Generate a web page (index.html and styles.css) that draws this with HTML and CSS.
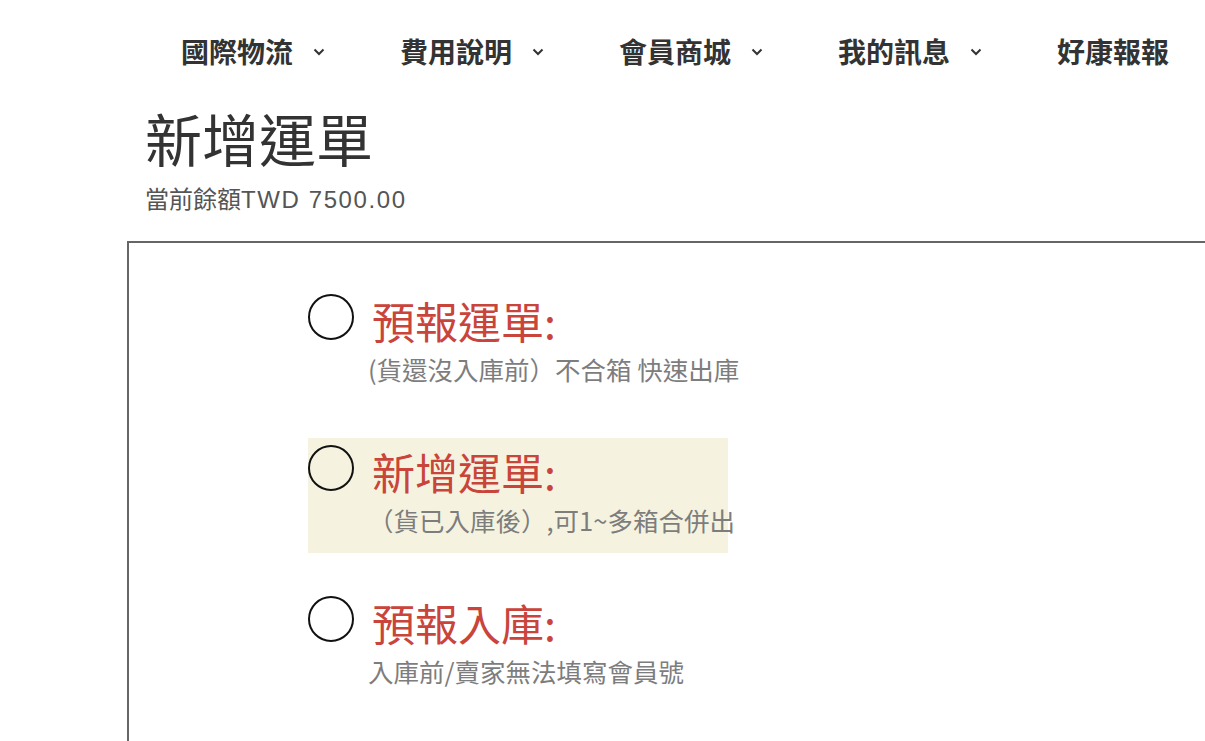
FILE: index.html
```html
<!DOCTYPE html>
<html lang="zh-Hant">
<head>
<meta charset="utf-8">
<title>新增運單</title>
<link rel="stylesheet" href="styles.css">
</head>
<body>
<header class="nav">
  <div class="nav-item">國際物流<span class="chev"><svg width="12" height="8" viewBox="0 0 12 8"><path d="M1.5 1.5 L6 6 L10.5 1.5" fill="none" stroke="#333" stroke-width="2"/></svg></span></div>
  <div class="nav-item">費用說明<span class="chev"><svg width="12" height="8" viewBox="0 0 12 8"><path d="M1.5 1.5 L6 6 L10.5 1.5" fill="none" stroke="#333" stroke-width="2"/></svg></span></div>
  <div class="nav-item">會員商城<span class="chev"><svg width="12" height="8" viewBox="0 0 12 8"><path d="M1.5 1.5 L6 6 L10.5 1.5" fill="none" stroke="#333" stroke-width="2"/></svg></span></div>
  <div class="nav-item">我的訊息<span class="chev"><svg width="12" height="8" viewBox="0 0 12 8"><path d="M1.5 1.5 L6 6 L10.5 1.5" fill="none" stroke="#333" stroke-width="2"/></svg></span></div>
  <div class="nav-item">好康報報</div>
</header>
<section class="heading">
  <h1 class="title">新增運單</h1>
  <p class="balance">當前餘額<span class="amount">TWD 7500.00</span></p>
</section>
<main class="panel">
  <div class="option">
    <div class="option-row"><span class="radio"></span><span class="label">預報運單:</span></div>
    <div class="desc">(貨還沒入庫前）不合箱 快速出庫</div>
  </div>
  <div class="option option-active">
    <div class="option-row"><span class="radio"></span><span class="label">新增運單:</span></div>
    <div class="desc">（貨已入庫後）,可1~多箱合併出</div>
  </div>
  <div class="option">
    <div class="option-row"><span class="radio"></span><span class="label">預報入庫:</span></div>
    <div class="desc">入庫前/賣家無法填寫會員號</div>
  </div>
</main>
</body>
</html>
```
FILE: styles.css
```css
html, body {
  margin: 0;
  padding: 0;
  background: #fff;
  overflow: hidden;
  width: 1205px;
  height: 741px;
}
body {
  font-family: "Noto Sans CJK TC", "Noto Sans", sans-serif;
  color: #333;
}
.nav {
  display: flex;
  padding: 31px 0 0 181px;
  height: 40px;
}
.nav-item {
  width: 219px;
  flex: none;
  font-size: 28px;
  font-weight: 700;
  line-height: 40px;
  color: #333;
  display: flex;
  align-items: center;
}
.chev {
  margin-left: 20px;
  display: inline-flex;
  align-items: center;
  padding-top: 2px;
}
.heading {
  padding: 33px 0 0 145px;
}
.title {
  margin: 0;
  font-size: 57px;
  font-weight: 400;
  line-height: 66px;
  color: #333;
}
.balance {
  margin: 13px 0 0;
  font-size: 24px;
  line-height: 30px;
  color: #555;
}
.amount {
  font-family: "Liberation Sans", "Noto Sans", sans-serif;
  letter-spacing: 1.6px;
}
.panel {
  margin: 26px 0 0 127px;
  border: 2px solid #666;
  width: 1200px;
  height: 600px;
  box-sizing: border-box;
  padding: 44px 0 0 179px;
  display: flex;
  flex-direction: column;
  gap: 36px;
}
.option {
  width: 420px;
  height: 115px;
  box-sizing: border-box;
  padding-top: 7px;
}
.option-active {
  background: #f5f3df;
}
.option-row {
  display: flex;
  align-items: flex-start;
  height: 54px;
}
.radio {
  width: 46px;
  height: 46px;
  box-sizing: border-box;
  border: 2px solid #111;
  border-radius: 50%;
  flex: none;
}
.label {
  margin-left: 18px;
  margin-top: -2px;
  font-size: 43px;
  line-height: 56px;
  color: #c9443a;
}
.desc {
  margin: 6px 0 0 60px;
  font-size: 25.5px;
  line-height: 30px;
  color: #7d7d7d;
  white-space: nowrap;
}
```
